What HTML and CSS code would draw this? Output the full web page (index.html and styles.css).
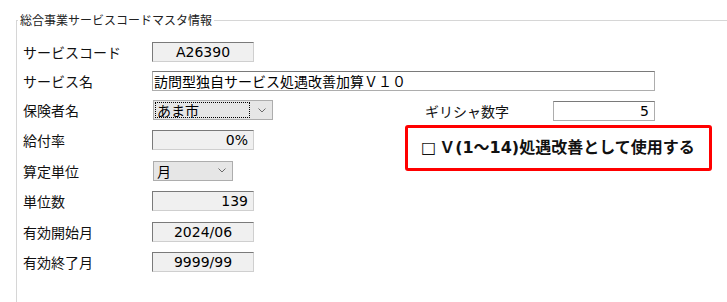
FILE: index.html
```html
<!DOCTYPE html>
<html lang="ja">
<head>
  <meta charset="UTF-8">
  <meta name="viewport" content="width=device-width, initial-scale=1.0">
  <title>総合事業サービスコードマスタ情報</title>
  <link rel="stylesheet" href="styles.css">
</head>
<body>
  <fieldset class="master">
    <legend>総合事業サービスコードマスタ情報</legend>
    <div class="form">
      <div class="top-rows">
        <div class="row">
          <label>サービスコード</label>
          <div class="box center">A26390</div>
        </div>
        <div class="row">
          <label>サービス名</label>
          <div class="input wide">訪問型独自サービス処遇改善加算Ｖ１０</div>
        </div>
      </div>

      <div class="columns">
        <div class="left-col">
          <div class="row">
            <label>保険者名</label>
            <div class="select insurer">
              <span class="focus">あま市</span>
              <svg class="chevron" width="8" height="5" viewBox="0 0 8 5"><path d="M0.5 0.5 L4 4 L7.5 0.5" fill="none" stroke="#6b6b6b" stroke-width="1"/></svg>
            </div>
          </div>
          <div class="row">
            <label>給付率</label>
            <div class="box right">0%</div>
          </div>
          <div class="row">
            <label>算定単位</label>
            <div class="select unit">
              <span class="plain">月</span>
              <svg class="chevron" width="8" height="5" viewBox="0 0 8 5"><path d="M0.5 0.5 L4 4 L7.5 0.5" fill="none" stroke="#6b6b6b" stroke-width="1"/></svg>
            </div>
          </div>
          <div class="row">
            <label>単位数</label>
            <div class="box right">139</div>
          </div>
          <div class="row">
            <label>有効開始月</label>
            <div class="box center">2024/06</div>
          </div>
          <div class="row">
            <label>有効終了月</label>
            <div class="box center">9999/99</div>
          </div>
        </div>

        <div class="right-col">
          <div class="row greek">
            <label>ギリシャ数字</label>
            <div class="input num">5</div>
          </div>
          <div class="notice">
            <span class="check">□</span>Ｖ(1～14)処遇改善として使用する
          </div>
        </div>
      </div>
    </div>
  </fieldset>
</body>
</html>
```

FILE: styles.css
```css
html, body { margin: 0; padding: 0; background: #fff; overflow: hidden; }
body { width: 727px; height: 302px; font-family: "Noto Sans CJK JP", sans-serif; color: #1a1a1a; }

.master { margin: 12px 0 0 16px; padding: 0 0 0 1px; width: 716px; min-height: 310px; border: 1px solid #d6d6d6; box-sizing: border-box; }
.master legend { padding: 0 2px; font-size: 12px; line-height: 16px; color: #222; }

.form { padding: 14px 0 0 5px; }
.top-rows { display: flex; flex-direction: column; gap: 9px; margin-bottom: 9px; }
.columns { display: flex; }
.left-col { display: flex; flex-direction: column; gap: 10.4px; width: 382px; }
.right-col { padding-top: 1px; }

.row { display: flex; align-items: center; height: 20px; }
.row label { width: 129px; font-size: 14px; line-height: 20px; color: #111; flex-shrink: 0; }

.box, .input { box-sizing: border-box; height: 20px; font-family: "DejaVu Sans", "Noto Sans CJK JP", sans-serif; font-size: 14px; line-height: 18px; color: #000; white-space: nowrap; overflow: hidden; }
.box { width: 102px; background: #f0f0f0; border-style: solid; border-width: 1px; border-color: #7a7a7a #cfcfcf #cfcfcf #7a7a7a; }
.box.center { text-align: center; }
.box.right { text-align: right; padding-right: 5px; }

.input { background: #fff; border-style: solid; border-width: 1px; border-color: #7a7a7a #adadad #adadad #adadad; }
.input.wide { width: 503px; padding-left: 1px; font-family: "Noto Sans CJK JP", sans-serif; }
.input.num { width: 102px; text-align: right; padding-right: 5px; }

.select { box-sizing: border-box; height: 20px; display: flex; align-items: center; justify-content: space-between; margin-left: 1px; background: #e6e6e6; border: 1px solid #adadad; font-size: 14px; color: #000; }
.select.insurer { width: 120px; }
.select.unit { width: 80px; }
.select .focus { box-sizing: border-box; width: 95px; height: 16px; margin-left: 1px; padding-left: 1px; line-height: 15px; border: 1px dotted #000; }
.select .plain { padding-left: 3px; line-height: 16px; }
.select .chevron { margin-right: 6px; }

.greek { padding-left: 20px; }
.greek label { width: 128px; }

.notice { box-sizing: border-box; width: 307px; height: 46px; margin-top: 4px; padding: 8px 0 0 13px; border: 3px solid #ff0000; border-radius: 3px; font-family: "DejaVu Sans", "Noto Sans CJK JP", sans-serif; font-weight: bold; font-size: 16px; line-height: 24px; color: #111; white-space: nowrap; }
.notice .check { font-weight: normal; margin-right: 3px; }
```
